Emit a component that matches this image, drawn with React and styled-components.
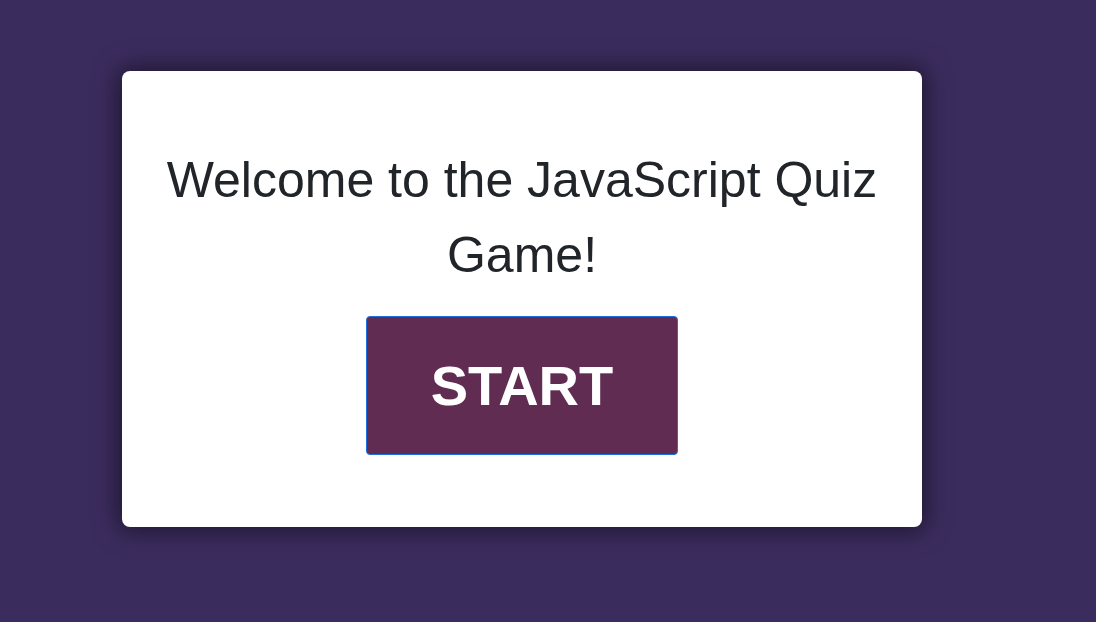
import React from 'react';
import styled, { createGlobalStyle } from 'styled-components';

const GlobalStyle = createGlobalStyle`
  html, body {
    margin: 0;
    padding: 0;
    background-color: #3b2c5e;
  }
  body {
    font-family: "Liberation Sans", Arial, sans-serif;
  }
`;

const App = () => (
  <Page>
    <GlobalStyle />
    <Card>
      <Title>Welcome to the JavaScript Quiz Game!</Title>
      <StartButton>START</StartButton>
    </Card>
  </Page>
);

const Page = styled.div`
  min-height: 622px;
  box-sizing: border-box;
  padding: 71px 0 0 122px;
  display: flex;
  align-items: flex-start;
`;

const Card = styled.div`
  width: 800px;
  height: 456px;
  box-sizing: border-box;
  padding: 72px 40px 0;
  background-color: #ffffff;
  border-radius: 8px;
  box-shadow: 0 0 24px 4px rgba(0, 0, 0, 0.5);
  display: flex;
  flex-direction: column;
  align-items: center;
`;

const Title = styled.h1`
  margin: 0 0 23px;
  font-size: 50px;
  font-weight: 400;
  line-height: 1.5;
  color: #212529;
  text-align: center;
`;

const StartButton = styled.button`
  width: 312px;
  height: 139px;
  display: flex;
  align-items: center;
  justify-content: center;
  background-color: #612c51;
  color: #ffffff;
  border: 1px solid #1f6fdc;
  border-radius: 4px;
  font-family: "Liberation Sans", Arial, sans-serif;
  font-size: 56px;
  font-weight: 700;
  cursor: pointer;
`;

export default App;
